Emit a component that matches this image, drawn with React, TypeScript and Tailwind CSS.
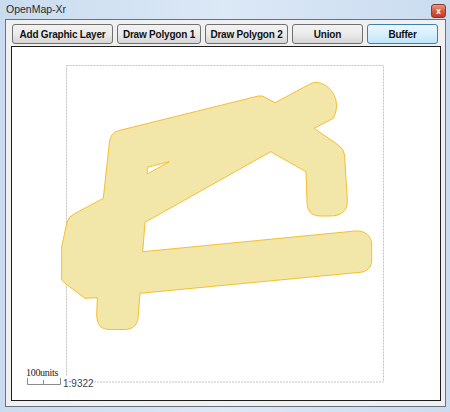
import React from 'react';

const buttons = [
  { label: 'Add Graphic Layer', w: 'w-[101px]', active: false },
  { label: 'Draw Polygon 1', w: 'w-[84px]', active: false },
  { label: 'Draw Polygon 2', w: 'w-[83px]', active: false },
  { label: 'Union', w: 'w-[71px]', active: false },
  { label: 'Buffer', w: 'w-[71px]', active: true },
];

// buffered polygon, drawn in page coordinates
const bufferPath = [
  'M109.3 143.3 Q110 133 118.3 130.7 L258.3 96 Q263 95 266.7 98.3 L275 102.7 L310 84',
  'C322 77 345 95 333.3 118.3 L314 128.3 L338.3 145 Q344 149 344.5 155 L347.3 200',
  'C348 212 340 216 330 216 L320 216 C311 216 307 210 307 202 L306 171.7 L270.7 151.7',
  'L145 222.3 L142.7 251.7 L355 231 C365 230 371.7 236 371.7 245 L371.7 260',
  'C371.7 267 367 272 360 272.3 L140 293.3 L138.3 315 C138.3 325 133 329.5 124 329.5',
  'L110 329.5 C101 329.5 96.7 325 96.7 314 L97.3 297.7 L85 298.3 L65 283.3 L61.7 280',
  'L61.7 246.7 L67 222 Q69 216 75 213.5 L103.3 198.3 Z',
  'M147.3 167.3 L169.3 161.7 L147.3 174 Z',
].join(' ');

function MapView() {
  return (
    <div className="relative ml-[5px] mr-[4px] mt-[2px] h-[355px] border border-[#1c1c1c] bg-white overflow-hidden">
      <svg width="428" height="353" viewBox="12 47 428 353" className="block">
        <rect x="66.5" y="65.5" width="317" height="316.5" fill="none" stroke="#c4c4c4" strokeDasharray="2 1" />
        <path d={bufferPath} fill="#f2e7a8" fillRule="evenodd" stroke="#f5bf2f" strokeWidth="1" />
        <rect x="58" y="376" width="32" height="10" fill="white" />
        <g stroke="#8a8a8a" strokeWidth="1">
          <line x1="27.5" y1="378" x2="27.5" y2="384.5" />
          <line x1="43.5" y1="380" x2="43.5" y2="384.5" />
          <line x1="60.5" y1="378" x2="60.5" y2="384.5" />
          <line x1="27.5" y1="384.5" x2="60.5" y2="384.5" />
        </g>
      </svg>
      <span className="absolute left-[14px] top-[320px] text-[10px] leading-[11px] text-[#222] font-['Liberation_Serif',serif] tracking-[-0.3px]">
        100units
      </span>
      <span className="absolute left-[51px] top-[331px] text-[10px] leading-[11px] text-[#444] font-['Liberation_Sans',sans-serif]">
        1:9322
      </span>
    </div>
  );
}

export default function App() {
  return (
    <div className="w-[450px] h-[412px] overflow-hidden bg-gradient-to-r from-[#c9dcef] via-[#dbe8f6] to-[#cadcf0] font-['Liberation_Sans',sans-serif]">
      {/* Title bar */}
      <div className="h-[19px] flex items-center justify-between pl-[6px] pr-[4px]">
        <span className="text-[10.5px] text-[#2a2a2a] pt-[1px]">OpenMap-Xr</span>
        <div className="w-[15px] h-[14px] mt-[3px] rounded-[3px] border border-[#8a3b2c] bg-gradient-to-b from-[#e79a86] via-[#d45a42] to-[#c23c24] flex items-center justify-center">
          <span className="text-white text-[9px] leading-none font-bold">x</span>
        </div>
      </div>

      {/* Client area */}
      <div className="ml-[5px] mr-[4px] h-[388px] border border-[#68737f] bg-[#f0f0f0] pt-[4px]">
        <div className="flex gap-[4px] ml-[6px]">
          {buttons.map((b) => (
            <button
              key={b.label}
              className={
                b.w +
                ' h-[20px] rounded-[3px] border text-[10px] font-bold tracking-[-0.2px] text-[#111] ' +
                (b.active
                  ? 'border-[#3c7fb1] bg-gradient-to-b from-[#eaf6fd] via-[#d9f0fc] to-[#bee6fd]'
                  : 'border-[#707070] bg-gradient-to-b from-[#f2f2f2] via-[#ebebeb] to-[#d6d6d6]')
              }
            >
              {b.label}
            </button>
          ))}
        </div>
        <MapView />
      </div>
    </div>
  );
}
